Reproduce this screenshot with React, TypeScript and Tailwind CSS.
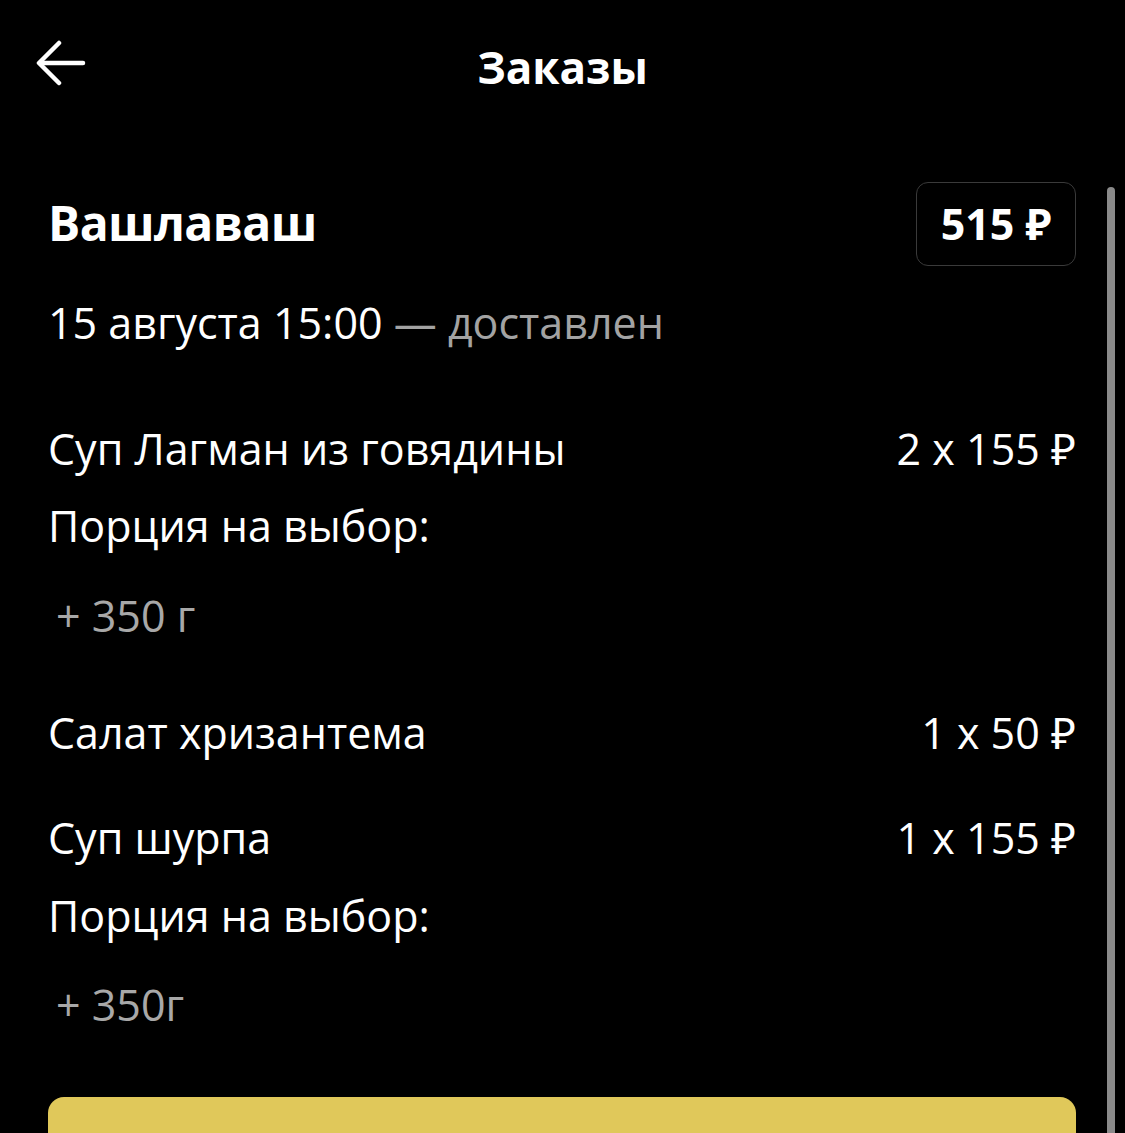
import React from "react";

const Line = ({ children, className = "" }: { children: React.ReactNode; className?: string }) => (
  <div className={`flex items-center justify-between leading-[56px] ${className}`}>{children}</div>
);

export default function App() {
  return (
    <div className="relative w-[1125px] h-[1133px] overflow-hidden bg-black text-white" style={{ fontFamily: '"Open Sans", "Noto Sans", sans-serif' }}>
      <header className="relative h-[136px] flex items-center justify-center">
        <svg className="absolute left-[36px] top-[40px]" width="50" height="46" viewBox="0 0 50 46" fill="none" stroke="white" strokeWidth="4.5" strokeLinecap="round" strokeLinejoin="round">
          <path d="M47 23H4" />
          <path d="M23 3L3 23L23 43" />
        </svg>
        <h1 className="text-[44px] font-bold leading-none -mt-[3px]">Заказы</h1>
      </header>

      <main className="pl-[48px] pr-[49px] pt-[46px]">
        <div className="flex items-center justify-between h-[84px]">
          <div className="text-[48px] font-bold tracking-[-0.6px] -mt-[2px]">Вашлаваш</div>
          <div className="h-[84px] w-[160px] rounded-[12px] border border-[#3a3a3a] flex items-center justify-center text-[43px] font-bold">
            515 ₽
          </div>
        </div>

        <Line className="mt-[29px] text-[43px] !justify-start">
          <span>15 августа 15:00</span>
          <span className="text-[#a3a3a3]">&nbsp;— доставлен</span>
        </Line>

        <Line className="mt-[70px] text-[43px]">
          <span>Суп Лагман из говядины</span>
          <span>2 x 155 ₽</span>
        </Line>
        <Line className="mt-[21px] text-[43px]">
          <span>Порция на выбор:</span>
        </Line>
        <Line className="mt-[34px] text-[43px] !justify-start">
          <span className="pl-[8px] text-[#a8a8a8]">+ 350 г</span>
        </Line>

        <Line className="mt-[61px] text-[43px]">
          <span>Салат хризантема</span>
          <span>1 x 50 ₽</span>
        </Line>
        <Line className="mt-[49px] text-[43px]">
          <span>Суп шурпа</span>
          <span>1 x 155 ₽</span>
        </Line>
        <Line className="mt-[22px] text-[43px]">
          <span>Порция на выбор:</span>
        </Line>
        <Line className="mt-[33px] text-[43px] !justify-start">
          <span className="pl-[8px] text-[#a8a8a8]">+ 350г</span>
        </Line>

        <button className="mt-[64px] w-full h-[100px] rounded-[16px] bg-[#e0c85a]" />
      </main>

      <div className="absolute left-[1107px] top-[187px] w-[8px] h-[960px] rounded-t-full bg-[#8a8a8a]" />
    </div>
  );
}
